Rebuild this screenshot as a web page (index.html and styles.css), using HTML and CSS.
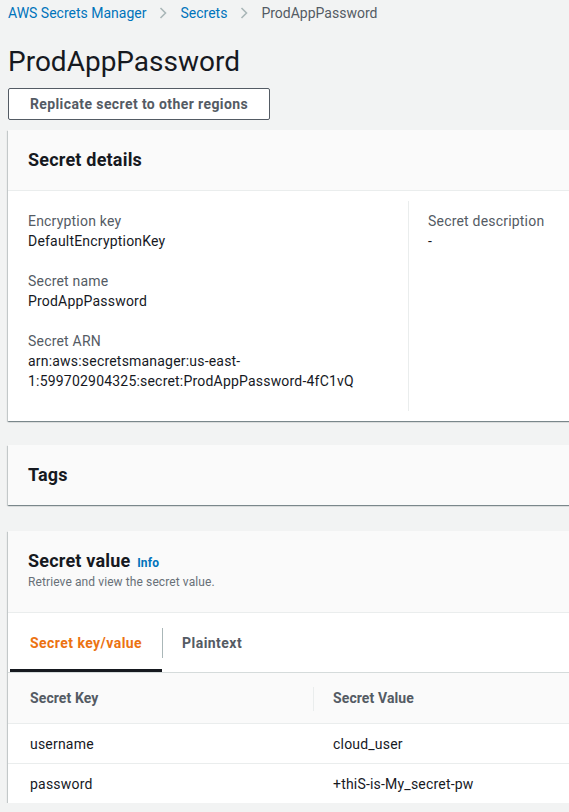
FILE: index.html
```html
<!DOCTYPE html>
<html lang="en">
<head>
<meta charset="utf-8">
<title>ProdAppPassword</title>
<link rel="stylesheet" href="styles.css">
</head>
<body>
<div class="page">
  <nav class="crumbs">
    <a class="crumb-link" href="#">AWS Secrets Manager</a>
    <svg class="chev" width="8" height="12" viewBox="0 0 8 12"><path d="M1.5 1 L6.5 6 L1.5 11" fill="none" stroke="#aab7b8" stroke-width="1.6"/></svg>
    <a class="crumb-link" href="#">Secrets</a>
    <svg class="chev" width="8" height="12" viewBox="0 0 8 12"><path d="M1.5 1 L6.5 6 L1.5 11" fill="none" stroke="#aab7b8" stroke-width="1.6"/></svg>
    <span class="crumb-current">ProdAppPassword</span>
  </nav>

  <h1 class="title">ProdAppPassword</h1>
  <button class="btn">Replicate secret to other regions</button>

  <section class="card">
    <header class="card-head bordered">
      <h2 class="card-title">Secret details</h2>
    </header>
    <div class="details">
      <div class="col">
        <div class="field">
          <div class="label">Encryption key</div>
          <div class="value">DefaultEncryptionKey</div>
        </div>
        <div class="field">
          <div class="label">Secret name</div>
          <div class="value">ProdAppPassword</div>
        </div>
        <div class="field">
          <div class="label">Secret ARN</div>
          <div class="value">arn:aws:secretsmanager:us-east-1:599702904325:secret:ProdAppPassword-4fC1vQ</div>
        </div>
      </div>
      <div class="col col-right">
        <div class="field">
          <div class="label">Secret description</div>
          <div class="value">-</div>
        </div>
      </div>
    </div>
  </section>

  <section class="card">
    <header class="card-head">
      <h2 class="card-title">Tags</h2>
    </header>
  </section>

  <section class="card card-value">
    <header class="card-head bordered value-head">
      <h2 class="card-title">Secret value <a class="info" href="#">Info</a></h2>
      <p class="desc">Retrieve and view the secret value.</p>
    </header>
    <div class="tabs">
      <div class="tab active">Secret key/value</div>
      <div class="tab">Plaintext</div>
    </div>
    <table class="kv">
      <thead>
        <tr><th class="c1">Secret Key</th><th class="c2"><span class="th-div"></span>Secret Value</th></tr>
      </thead>
      <tbody>
        <tr><td class="c1">username</td><td class="c2">cloud_user</td></tr>
        <tr><td class="c1">password</td><td class="c2">+thiS-is-My_secret-pw</td></tr>
      </tbody>
    </table>
  </section>
</div>
</body>
</html>
```

FILE: styles.css
```css
html {
  overflow: hidden;
}
body {
  margin: 0;
  background: #f2f3f3;
  font-family: Roboto, "Liberation Sans", sans-serif;
  font-size: 14px;
  line-height: 20px;
  color: #16191f;
}
.page {
  width: 800px;
  padding: 3px 0 0 8px;
}
.crumbs {
  display: flex;
  align-items: center;
  height: 20px;
}
.crumb-link {
  color: #0073bb;
  text-decoration: none;
}
.chev {
  margin: 0 13px 0 13px;
}
.crumb-current {
  color: #545b64;
}
.title {
  margin: 21px 0 0 0;
  font-size: 28px;
  line-height: 36px;
  font-weight: 400;
  color: #16191f;
}
.btn {
  display: block;
  margin-top: 8px;
  height: 32px;
  width: 262px;
  padding: 0;
  background: #fff;
  border: 1px solid #545b64;
  border-radius: 2px;
  font-family: inherit;
  font-size: 14px;
  font-weight: 700;
  color: #545b64;
  letter-spacing: 0.4px;
}
.card {
  margin-top: 10px;
  background: #fff;
  box-shadow: 0 1px 1px 0 rgba(0, 28, 36, 0.3), 1px 1px 1px 0 rgba(0, 28, 36, 0.15), -1px 1px 1px 0 rgba(0, 28, 36, 0.15);
}
.card + .card {
  margin-top: 24px;
}
.card + .card-value {
  margin-top: 26px;
}
.card-head {
  background: #fafafa;
  padding: 19px 20px 19px;
}
.card-head.bordered {
  border-bottom: 1px solid #eaeded;
}
.card-title {
  margin: 0;
  font-size: 18px;
  line-height: 22px;
  font-weight: 700;
  color: #16191f;
  letter-spacing: 0.2px;
}
.info {
  font-size: 12px;
  font-weight: 700;
  color: #0073bb;
  text-decoration: none;
  margin-left: 2px;
  letter-spacing: 0.2px;
}
.value-head {
  padding-bottom: 22px;
}
.desc {
  margin: 0;
  font-size: 12px;
  line-height: 16px;
  color: #687078;
  letter-spacing: 0.1px;
}
.details {
  display: grid;
  grid-template-columns: 380px 1fr;
  padding: 10px 0 10px 20px;
}
.col {
  padding: 10px 20px 20px 0;
}
.col-right {
  border-left: 1px solid #eaeded;
  padding-left: 19px;
}
.field + .field {
  margin-top: 20px;
}
.label {
  color: #545b64;
  letter-spacing: 0.2px;
}
.value {
  color: #16191f;
  letter-spacing: 0.2px;
}
.tabs {
  display: flex;
  padding-left: 2px;
  border-bottom: 1px solid #d5dbdb;
  height: 59px;
  align-items: stretch;
}
.tab {
  display: flex;
  align-items: center;
  padding: 0 20px;
  font-weight: 700;
  color: #545b64;
  position: relative;
  letter-spacing: 0.45px;
}
.tab.active {
  color: #ec7211;
  box-shadow: inset 0 -3px 0 #16191f;
}
.tab.active::after {
  content: "";
  position: absolute;
  right: -1px;
  top: 15px;
  height: 30px;
  border-right: 1px solid #aab7b8;
}
.kv {
  width: 100%;
  border-collapse: collapse;
}
.kv th {
  background: #fafafa;
  height: 50px;
  text-align: left;
  font-weight: 700;
  color: #545b64;
  border-bottom: 1px solid #eaeded;
  padding: 0;
  letter-spacing: 0.1px;
}
.kv td {
  height: 39px;
  padding: 0;
  border-bottom: 1px solid #eaeded;
  letter-spacing: 0.2px;
}
.kv tbody tr:last-child td {
  border-bottom: none;
}
.c1 {
  width: 283px;
  padding-left: 22px !important;
}
.c2 {
  padding-left: 20px !important;
  position: relative;
}
.th-div {
  position: absolute;
  left: 0;
  top: 14px;
  height: 24px;
  border-left: 1px solid #eaeded;
}
```
